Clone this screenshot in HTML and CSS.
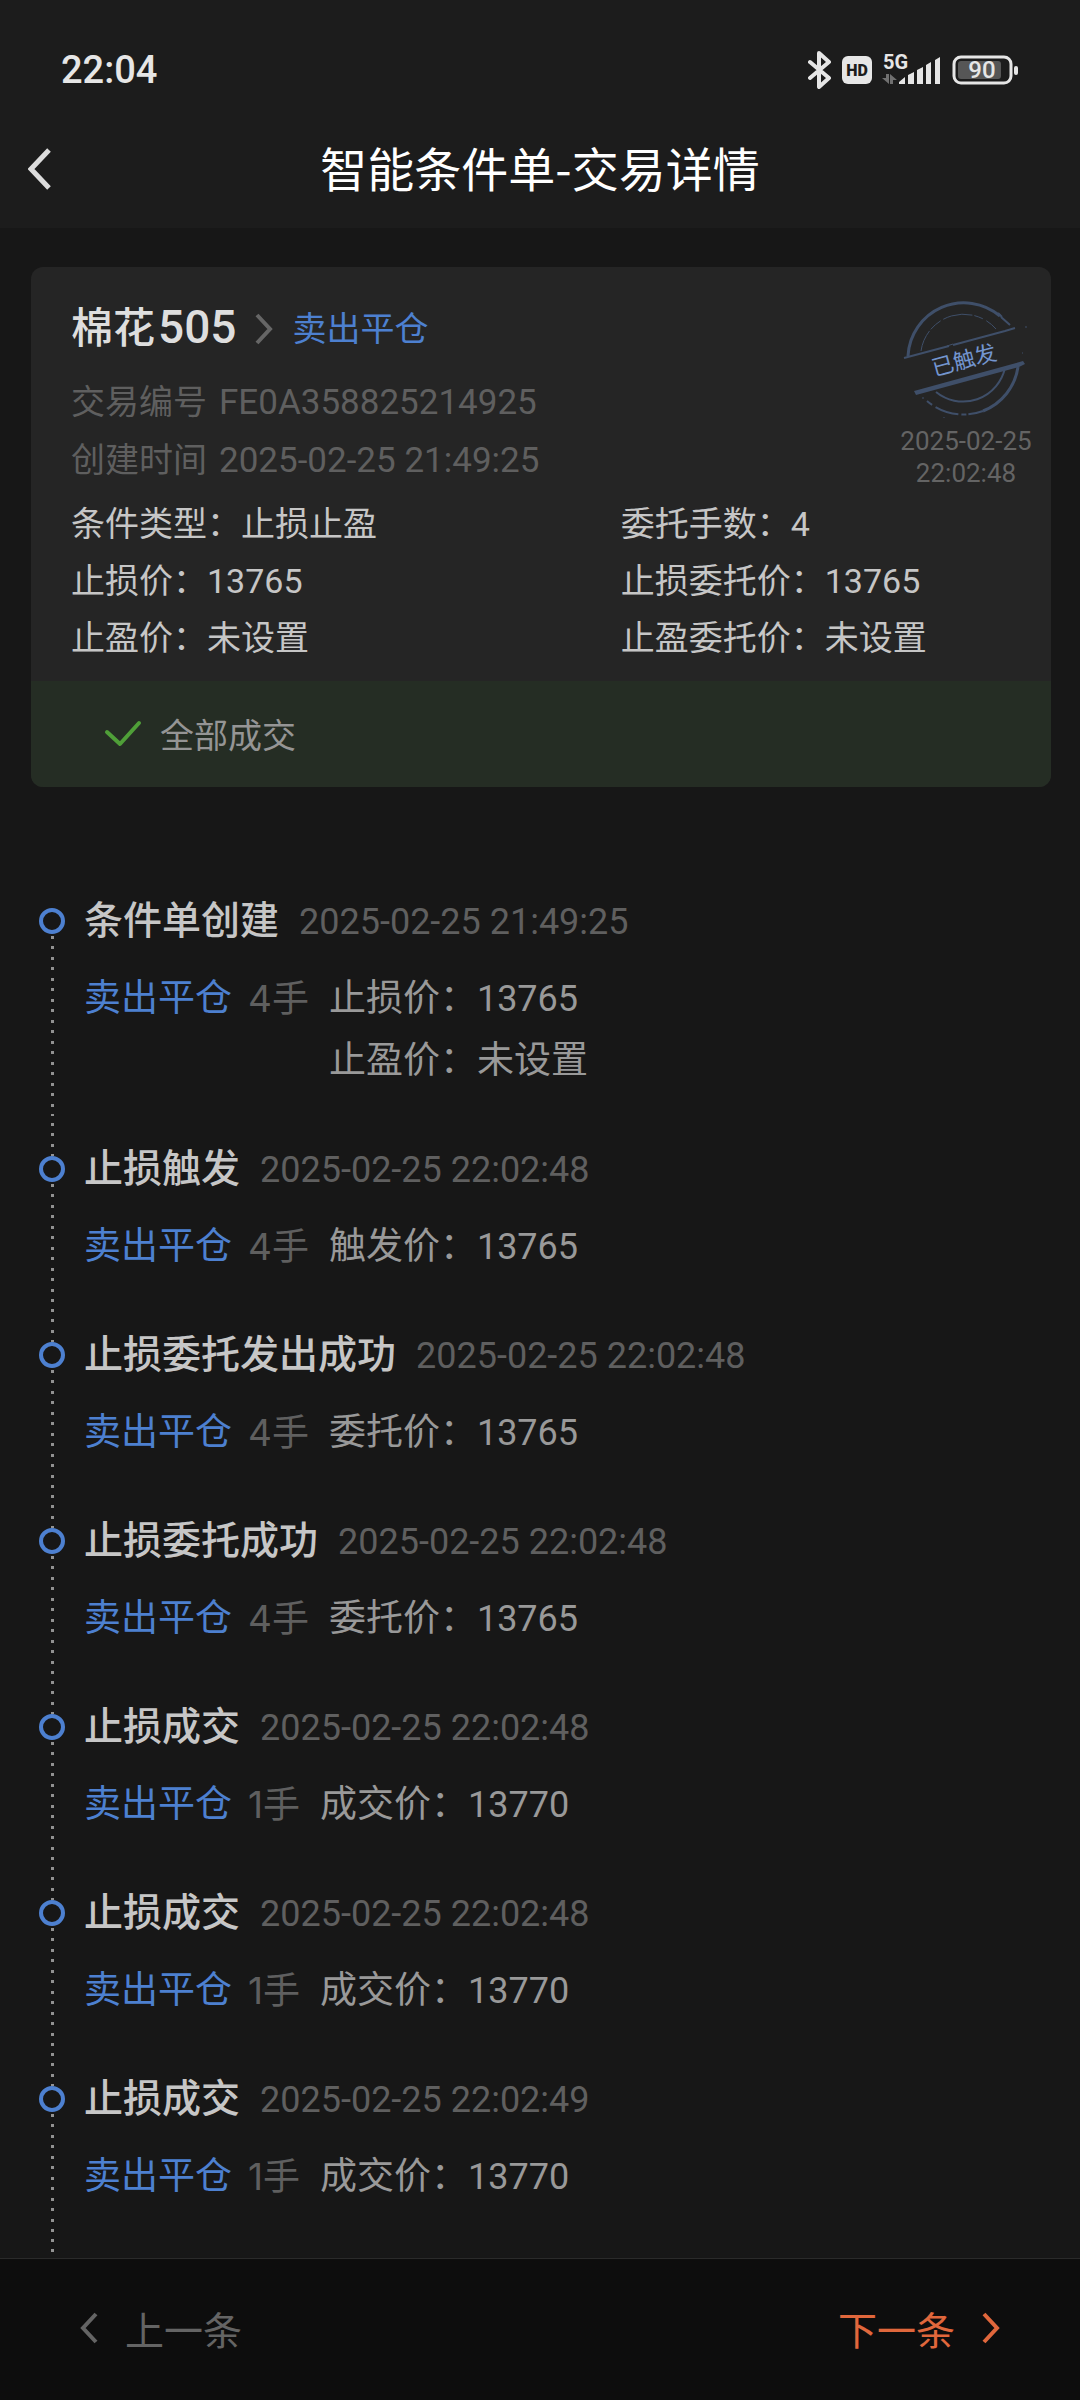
FILE: index.html
```html
<!DOCTYPE html>
<html lang="zh-CN">
<head>
<meta charset="utf-8">
<meta name="viewport" content="width=device-width">
<title>智能条件单-交易详情</title>
<link rel="stylesheet" href="styles.css">
</head>
<body>
<header class="top">
  <div class="status">
    <time class="clock">22:04</time>
    <div class="status-icons">
      <svg width="24" height="38" viewBox="0 0 24 38" fill="none" stroke="#e6e6e6" stroke-width="4" stroke-linejoin="round" stroke-linecap="round"><path d="M2 11 21 27 11 36V2L21 11 2 27"/></svg>
      <svg width="30" height="38" viewBox="0 0 30 38"><rect y="5" width="30" height="28" rx="6" fill="#e6e6e6"/><text class="hd" x="15" y="25" text-anchor="middle">HD</text></svg>
      <svg width="60" height="38" viewBox="0 0 60 38"><text class="net" x="1" y="18">5G</text>
        <g fill="#707070"><path d="M4 23h3v10L0 27h4zM8 33V23l7 6h-4v4z"/></g>
        <g fill="#e6e6e6"><path d="M17 33v-2l6-5v7zM26 33V24l6-3v12zM35 33V19l6-3v17zM44 33V14l5-3v22zM53 33V9l5-3v27z"/></g></svg>
      <svg width="68" height="38" viewBox="0 0 68 38"><rect x="2" y="6" width="57" height="26" rx="7" fill="none" stroke="#e6e6e6" stroke-width="3"/><rect x="6" y="10" width="43" height="18" rx="3" fill="#565656"/><rect x="62" y="15" width="4" height="9" rx="2" fill="#e6e6e6"/><text class="charge" x="30" y="27" text-anchor="middle">90</text></svg>
    </div>
  </div>
  <nav class="nav">
    <button class="back" type="button" aria-label="返回"><svg width="24" height="42" viewBox="0 0 24 42" fill="none" stroke="#dcdcdc" stroke-width="5"><path d="M21 2 3 21l18 19"/></svg></button>
    <h1 class="page-title">智能条件单-交易详情</h1>
  </nav>
</header>

<main class="main">
  <section class="card">
    <div class="card-top">
      <div class="summary">
        <h2 class="contract">
          <span>棉花<span class="num-lg">505</span></span>
          <svg width="18" height="32" viewBox="0 0 18 32" fill="none" stroke="#666" stroke-width="4"><path d="m2 2 13 14L2 30"/></svg>
          <span class="side">卖出平仓</span>
        </h2>
        <p class="meta">交易编号<span class="num">FE0A358825214925</span></p>
        <p class="meta">创建时间<span class="num">2025-02-25 21:49:25</span></p>
      </div>
      <div class="stamp">
        <svg width="134" height="126" viewBox="0 0 134 126" fill="none" stroke="#3f4f69">
          <path stroke-width="3" d="M9 57A56 56 0 0 1 101 17"/>
          <path stroke-width="2" d="M102 18 111 26M99 14l4 4"/>
          <path stroke-width="1" stroke-dasharray="22 2 13 3 30 2 9 4" d="M22 52A43 43 0 0 1 97 30"/>
          <path stroke-width="2" d="M5 59 50 47"/><path stroke-width="1" d="M48 47 54 45"/><path stroke-width="2" d="m54 46 52-14 10-3"/>
          <path fill="#3f4f69" stroke="none" d="m15 92 109-30 2 3-6 3L17 96z"/>
          <path stroke-width="2" d="M37 93A43 43 0 0 0 106 69"/>
          <path stroke-width="3" d="M119 68A56 56 0 0 1 84 112"/>
          <path stroke-width="2" stroke-dasharray="15 2 5 3 24 4" d="M84 112A56 56 0 0 1 28 102"/>
          <path stroke-width="1" d="M23 99h2M123 54h1M45 118v1M126 28h2"/>
          <text class="stamp-text" x="65" y="69" text-anchor="middle" transform="rotate(-15 65 61)">已触发</text>
        </svg>
        <time class="stamp-time">2025-02-25<br>22:02:48</time>
      </div>
    </div>
    <dl class="details">
      <div><dt>条件类型：</dt><dd>止损止盈</dd></div>
      <div><dt>委托手数：</dt><dd>4</dd></div>
      <div><dt>止损价：</dt><dd>13765</dd></div>
      <div><dt>止损委托价：</dt><dd>13765</dd></div>
      <div><dt>止盈价：</dt><dd>未设置</dd></div>
      <div><dt>止盈委托价：</dt><dd>未设置</dd></div>
    </dl>
    <p class="result"><svg width="38" height="28" viewBox="0 0 38 28" fill="none" stroke="#4f9f38" stroke-width="4" stroke-linecap="round" stroke-linejoin="round"><path d="m3 13 13 12L35 4"/></svg>全部成交</p>
  </section>

  <ol class="timeline">
    <li class="event">
      <div class="rail"><i class="dots-in"></i><i class="node"></i><i class="dots"></i></div>
      <div class="body">
        <div class="head"><h3 class="name">条件单创建</h3><time class="num date">2025-02-25 21:49:25</time></div>
        <div class="row"><span class="side">卖出平仓</span><span class="qty">4手</span><div><p>止损价：<span class="num">13765</span></p><p>止盈价：未设置</p></div></div>
      </div>
    </li>
    <li class="event">
      <div class="rail"><i class="dots-in"></i><i class="node"></i><i class="dots"></i></div>
      <div class="body">
        <div class="head"><h3 class="name">止损触发</h3><time class="num date">2025-02-25 22:02:48</time></div>
        <div class="row"><span class="side">卖出平仓</span><span class="qty">4手</span><p>触发价：<span class="num">13765</span></p></div>
      </div>
    </li>
    <li class="event">
      <div class="rail"><i class="dots-in"></i><i class="node"></i><i class="dots"></i></div>
      <div class="body">
        <div class="head"><h3 class="name">止损委托发出成功</h3><time class="num date">2025-02-25 22:02:48</time></div>
        <div class="row"><span class="side">卖出平仓</span><span class="qty">4手</span><p>委托价：<span class="num">13765</span></p></div>
      </div>
    </li>
    <li class="event">
      <div class="rail"><i class="dots-in"></i><i class="node"></i><i class="dots"></i></div>
      <div class="body">
        <div class="head"><h3 class="name">止损委托成功</h3><time class="num date">2025-02-25 22:02:48</time></div>
        <div class="row"><span class="side">卖出平仓</span><span class="qty">4手</span><p>委托价：<span class="num">13765</span></p></div>
      </div>
    </li>
    <li class="event">
      <div class="rail"><i class="dots-in"></i><i class="node"></i><i class="dots"></i></div>
      <div class="body">
        <div class="head"><h3 class="name">止损成交</h3><time class="num date">2025-02-25 22:02:48</time></div>
        <div class="row"><span class="side">卖出平仓</span><span class="qty">1手</span><p>成交价：<span class="num">13770</span></p></div>
      </div>
    </li>
    <li class="event">
      <div class="rail"><i class="dots-in"></i><i class="node"></i><i class="dots"></i></div>
      <div class="body">
        <div class="head"><h3 class="name">止损成交</h3><time class="num date">2025-02-25 22:02:48</time></div>
        <div class="row"><span class="side">卖出平仓</span><span class="qty">1手</span><p>成交价：<span class="num">13770</span></p></div>
      </div>
    </li>
    <li class="event">
      <div class="rail"><i class="dots-in"></i><i class="node"></i><i class="dots"></i></div>
      <div class="body">
        <div class="head"><h3 class="name">止损成交</h3><time class="num date">2025-02-25 22:02:49</time></div>
        <div class="row"><span class="side">卖出平仓</span><span class="qty">1手</span><p>成交价：<span class="num">13770</span></p></div>
      </div>
    </li>
  </ol>
  <div class="rail tail"><i class="dots-in"></i></div>
</main>

<footer class="pager">
  <button class="prev" type="button"><svg width="18" height="32" viewBox="0 0 18 32" fill="none" stroke="currentColor" stroke-width="4"><path d="M16 2 3 16l13 14"/></svg>上一条</button>
  <button class="next" type="button">下一条<svg width="18" height="32" viewBox="0 0 18 32" fill="none" stroke="currentColor" stroke-width="4"><path d="m2 2 13 14L2 30"/></svg></button>
</footer>
</body>
</html>
```

FILE: styles.css
```css
* { box-sizing: border-box; margin: 0; padding: 0; }
body {
  min-height: 100vh;
  display: flex;
  flex-direction: column;
  background: #171717;
  color: #c6c6c6;
  font-family: Roboto, "Noto Sans CJK SC", sans-serif;
  font-size: 34px;
}
h1, h2, h3 { font-weight: 400; }
svg { display: block; flex: none; }
button { border: 0; background: none; font: inherit; color: inherit; }

/* status bar and title */
.top { background: #1c1c1c; }
.status {
  display: flex;
  justify-content: space-between;
  align-items: center;
  padding: 40px 60px 10px 61px;
  line-height: 60px;
}
.clock { font-size: 38px; font-weight: 500; color: #e6e6e6; }
.status-icons { display: flex; gap: 10px; }
.hd { font: 900 16px Roboto, sans-serif; fill: #1c1c1c; }
.net { font: 700 20px Roboto, sans-serif; fill: #e6e6e6; }
.charge { font: 500 24px Roboto, sans-serif; fill: #e6e6e6; }
.nav {
  display: grid;
  grid-template-columns: 80px 1fr 80px;
  align-items: center;
  height: 118px;
}
.back { padding: 20px 28px; }
.page-title {
  padding-bottom: 4px;
  font-family: "Noto Sans CJK SC", sans-serif;
  font-size: 47px;
  line-height: 66px;
  text-align: center;
  color: #fff;
}

.main { flex: 1; }

/* order card */
.card {
  margin: 39px 29px 0 31px;
  border-radius: 12px;
  background: #252525;
  overflow: hidden;
}
.card-top {
  display: flex;
  justify-content: space-between;
  padding: 32px 18px 0 40px;
}
.contract {
  display: flex;
  align-items: center;
  gap: 19px;
  height: 60px;
  margin-bottom: 14px;
  font-size: 42px;
  font-weight: 500;
  line-height: 60px;
  color: #dedede;
}
.num-lg { margin-left: 3px; font-size: 46px; line-height: 1; }
.num { font-size: 36px; line-height: 1; }
.side { color: #4d80d0; }
.contract .side { font-size: 34px; font-weight: 400; }
.meta {
  display: flex;
  align-items: baseline;
  gap: 12px;
  height: 58px;
  line-height: 58px;
  color: #5f5f5f;
}
.meta .num { font-size: 35px; }
.stamp { width: 134px; }
.stamp-text { font: 22px "Noto Sans CJK SC", sans-serif; fill: #7395cf; stroke: none; }
.stamp-time {
  display: block;
  font-size: 26px;
  line-height: 32px;
  text-align: center;
  color: #646464;
}
.details {
  display: grid;
  grid-template-columns: 4fr 3fr;
  padding: 7px 18px 14px 40px;
  line-height: 57px;
}
.details div { display: flex; }
.result {
  display: flex;
  align-items: center;
  gap: 18px;
  height: 106px;
  padding: 0 74px 2px 73px;
  background: #252d24;
  color: #959595;
}

/* event timeline */
.timeline { list-style: none; margin-top: 81px; }
.event { display: flex; gap: 19px; padding: 0 39px; }
.rail {
  width: 26px;
  display: flex;
  flex-direction: column;
  align-items: center;
}
.node {
  width: 26px;
  height: 26px;
  border: 4px solid #4d80d0;
  border-radius: 50%;
}
.dots, .dots-in {
  width: 3px;
  background: repeating-linear-gradient(#929292 0 3px, transparent 3px 10px, #929292 10px 13px, transparent 13px 21px);
}
.dots { flex: 1; margin-top: 2px; }
.dots-in { height: 33px; margin-top: 7px; }
.event:first-child .dots-in { visibility: hidden; }
.tail { height: 25px; margin-left: 39px; overflow: hidden; }
.body { padding: 28px 0 24px; }
.head {
  display: flex;
  align-items: baseline;
  gap: 20px;
  height: 50px;
  margin-bottom: 22px;
  line-height: 50px;
}
.name { font-size: 39px; font-weight: 500; }
.date { color: #5f5f5f; }
.row {
  display: flex;
  font-size: 37px;
  line-height: 62px;
  color: #999;
}
.qty {
  margin: 0 20px 0 16px;
  font-family: Inter, "Noto Sans CJK SC", sans-serif;
  color: #5f5f5f;
}

/* previous / next */
.pager {
  position: sticky;
  bottom: 0;
  display: flex;
  justify-content: space-between;
  height: 142px;
  padding: 0 80px 4px;
  border-top: 1px solid #2a2a2a;
  background: #0d0d0d;
  font-size: 39px;
}
.pager button { display: flex; align-items: center; gap: 27px; }
.prev { color: #646464; }
.pager .next { color: #e0673c; }
```
